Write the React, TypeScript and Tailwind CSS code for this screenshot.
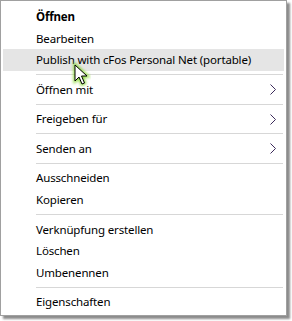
import React from "react";

type Item =
    | { type: "item"; label: string; bold?: boolean; sub?: boolean; hover?: boolean }
    | { type: "sep" };

const items: Item[] = [
    { type: "item", label: "Öffnen", bold: true },
    { type: "item", label: "Bearbeiten" },
    { type: "item", label: "Publish with cFos Personal Net (portable)", hover: true },
    { type: "sep" },
    { type: "item", label: "Öffnen mit", sub: true },
    { type: "sep" },
    { type: "item", label: "Freigeben für", sub: true },
    { type: "sep" },
    { type: "item", label: "Senden an", sub: true },
    { type: "sep" },
    { type: "item", label: "Ausschneiden" },
    { type: "item", label: "Kopieren" },
    { type: "sep" },
    { type: "item", label: "Verknüpfung erstellen" },
    { type: "item", label: "Löschen" },
    { type: "item", label: "Umbenennen" },
    { type: "sep" },
    { type: "item", label: "Eigenschaften" },
];

function Chevron() {
    return (
        <svg width="6" height="11" viewBox="0 0 6 11" className="shrink-0">
            <polyline points="0.5,0.5 5.5,5.5 0.5,10.5" fill="none" stroke="#3b2a5a" strokeWidth="1" />
        </svg>
    );
}

function Cursor() {
    return (
        <svg
            width="22"
            height="28"
            viewBox="0 0 22 28"
            className="absolute left-[69px] top-[60px] pointer-events-none"
        >
            <defs>
                <filter id="glow" x="-50%" y="-50%" width="200%" height="200%">
                    <feGaussianBlur stdDeviation="1.6" />
                </filter>
            </defs>
            {/* green glow */}
            <path
                d="M6 5 L6 21 L10 17 L13 24 L15.5 23 L12.5 16 L18 16 Z"
                fill="#7ed321"
                stroke="#7ed321"
                strokeWidth="3"
                filter="url(#glow)"
                opacity="0.9"
            />
            <path
                d="M6 5 L6 21 L10 17 L13 24 L15.5 23 L12.5 16 L18 16 Z"
                fill="#ffffff"
                stroke="#000000"
                strokeWidth="1"
            />
        </svg>
    );
}

export default function App() {
    return (
        <div className="w-[292px] h-[321px] bg-white relative" style={{ fontFamily: '"Noto Sans", "Open Sans", sans-serif' }}>
            <div className="w-[287px] h-[316px] border border-[#a0a0a0] bg-white shadow-[3px_3px_2px_rgba(0,0,0,0.45)] px-[2px] pt-[5px] pb-[2px] flex flex-col">
                {items.map((it, i) =>
                    it.type === "sep" ? (
                        <div key={i} className="h-[8px] flex items-center pl-[33px] pr-[1px]">
                            <div className="h-px w-full bg-[#d7d7d7]" />
                        </div>
                    ) : (
                        <div
                            key={i}
                            className={`h-[22px] flex items-center pl-[33px] pr-[8px] text-[11.5px] tracking-[-0.15px] text-black leading-none ${
                                it.hover ? "bg-[#e5e5e5]" : ""
                            } ${it.bold ? "font-bold" : ""}`}
                        >
                            <span className="flex-1 whitespace-nowrap">{it.label}</span>
                            {it.sub && <Chevron />}
                        </div>
                    )
                )}
            </div>
            <Cursor />
        </div>
    );
}
